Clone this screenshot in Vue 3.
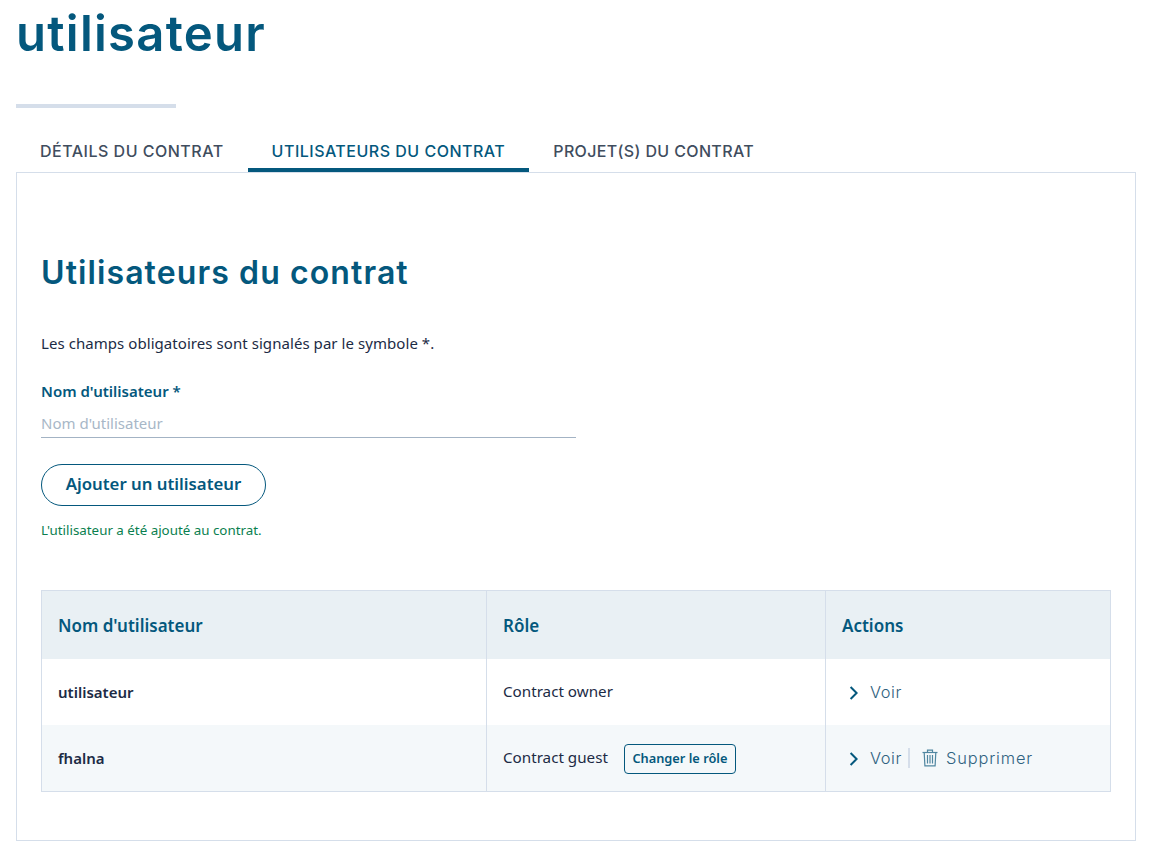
<script setup>
const tabs = [
  { label: 'DÉTAILS DU CONTRAT', active: false },
  { label: 'UTILISATEURS DU CONTRAT', active: true },
  { label: 'PROJET(S) DU CONTRAT', active: false },
]
const rows = [
  { name: 'utilisateur', role: 'Contract owner', guest: false },
  { name: 'fhalna', role: 'Contract guest', guest: true },
]
</script>

<template>
  <div class="page">
    <h1 class="title">utilisateur</h1>
    <div class="rule"></div>
    <nav class="tabs">
      <a v-for="t in tabs" :key="t.label" class="tab" :class="{ active: t.active }">{{ t.label }}</a>
    </nav>
    <section class="panel">
      <h2 class="heading">Utilisateurs du contrat</h2>
      <p class="hint">Les champs obligatoires sont signalés par le symbole *.</p>
      <label class="label">Nom d'utilisateur *</label>
      <div class="field">Nom d'utilisateur</div>
      <button class="add">Ajouter un utilisateur</button>
      <p class="success">L'utilisateur a été ajouté au contrat.</p>
      <div class="table">
        <div class="row head">
          <div class="cell">Nom d'utilisateur</div>
          <div class="cell">Rôle</div>
          <div class="cell">Actions</div>
        </div>
        <div v-for="r in rows" :key="r.name" class="row" :class="{ alt: r.guest }">
          <div class="cell name">{{ r.name }}</div>
          <div class="cell role">
            <span class="role-text">{{ r.role }}</span>
            <button v-if="r.guest" class="change">Changer le rôle</button>
          </div>
          <div class="cell actions">
            <a class="action">
              <svg class="chev" width="10" height="14" viewBox="0 0 10 14" fill="none">
                <path d="M2.6 1 8.6 7l-6 6" stroke="#04587d" stroke-width="2" />
              </svg>
              <span>Voir</span>
            </a>
            <template v-if="r.guest">
              <span class="sep"></span>
              <a class="action">
                <svg class="trash" width="16" height="18" viewBox="0 0 16 18" fill="none" stroke="#4f86a0" stroke-width="1.2">
                  <path d="M0.5 3.5h15" />
                  <path d="M5.5 3.3V1.1h5v2.2" />
                  <path d="M2.2 3.5l.7 13.4h10.2l.7-13.4" />
                  <path d="M5.5 6v8.5M8 6v8.5M10.500 6v8.500" />
                </svg>
                <span class="del">Supprimer</span>
              </a>
            </template>
          </div>
        </div>
      </div>
    </section>
  </div>
</template>

<style>
html, body { margin: 0; background: #fff; }
</style>

<style scoped>
.page {
  padding: 0 20px 16px 16px;
  font-family: "Noto Sans", "Open Sans", sans-serif;
  color: #1c2b45;
}
.title {
  margin: 0;
  height: 104px;
  padding-top: 3px;
  box-sizing: border-box;
  font: 600 49px/62px Inter, sans-serif;
  letter-spacing: 1.27px;
  color: #04587d;
}
.rule { width: 160px; height: 4px; background: #d5deea; }
.tabs { display: flex; margin-top: 22px; height: 42px; }
.tab {
  box-sizing: border-box;
  padding: 9px 24px 0;
  height: 42px;
  font: 500 16px/24px Inter, sans-serif;
  letter-spacing: 0.5px;
  color: #3f4d5e;
}
.tab:last-child { letter-spacing: 0.36px; }
.tab.active { color: #04587d; border-bottom: 4px solid #04587d; }
.panel {
  border: 1px solid #d5deea;
  height: 669px;
  box-sizing: border-box;
  padding: 0 24px;
}
.heading {
  margin: 0;
  padding-top: 80px;
  font: 600 32px/40px Inter, sans-serif;
  letter-spacing: 1.1px;
  color: #04587d;
}
.hint { margin: 40px 0 0; font-size: 15px; letter-spacing: 0.06px; line-height: 20px; }
.label { display: block; margin-top: 28px; font-size: 15px; line-height: 20px; font-weight: 600; color: #04587d; }
.field {
  width: 535px;
  height: 37px;
  box-sizing: border-box;
  padding-top: 12px;
  border-bottom: 1px solid #a3b3c4;
  font-size: 15px;
  line-height: 20px;
  color: #a8b7c7;
}
.add {
  display: block;
  margin-top: 26px;
  width: 225px;
  height: 42px;
  background: #fff;
  border: 1px solid #04587d;
  border-radius: 21px;
  padding: 0 0 2px;
  font: 600 16.8px/20px "Noto Sans", sans-serif;
  color: #04587d;
}
.success { margin: 15px 0 0; font-size: 13.35px; line-height: 18px; color: #0a7f4f; }
.table {
  margin-top: 51px;
  border: 1px solid #d5deea;
}
.row { display: grid; grid-template-columns: 444px 339px 1fr; height: 66px; }
.row.head { height: 68px; background: #e9f0f4; font-weight: 600; color: #04587d; font-size: 17px; }
.row.alt { background: #f4f8fa; }
.cell {
  display: flex;
  align-items: center;
  padding-left: 16px;
  box-sizing: border-box;
  border-left: 1px solid #d5deea;
}
.cell:first-child { border-left: 0; }
.name { font-size: 15px; font-weight: 600; }
.role { font-size: 15.2px; gap: 16px; }
.role-text { padding-bottom: 2px; }
.change {
  width: 112px;
  height: 30px;
  margin-top: 2px;
  padding: 0 0 2px;
  background: transparent;
  border: 1px solid #04587d;
  border-radius: 4px;
  font: 600 12.8px/16px "Noto Sans", sans-serif;
  color: #04587d;
}
.actions { padding-left: 22px; font: 300 16.4px/20px Inter, sans-serif; letter-spacing: 0.6px; color: #2f6280; }
.action { display: flex; align-items: center; }
.chev { margin-right: 12px; margin-top: 2px; }
.trash { margin-right: 8px; }
.del { letter-spacing: 0.85px; }
.sep { width: 2px; height: 20px; background: #d5deea; margin: 0 12px 0 6px; }
</style>
